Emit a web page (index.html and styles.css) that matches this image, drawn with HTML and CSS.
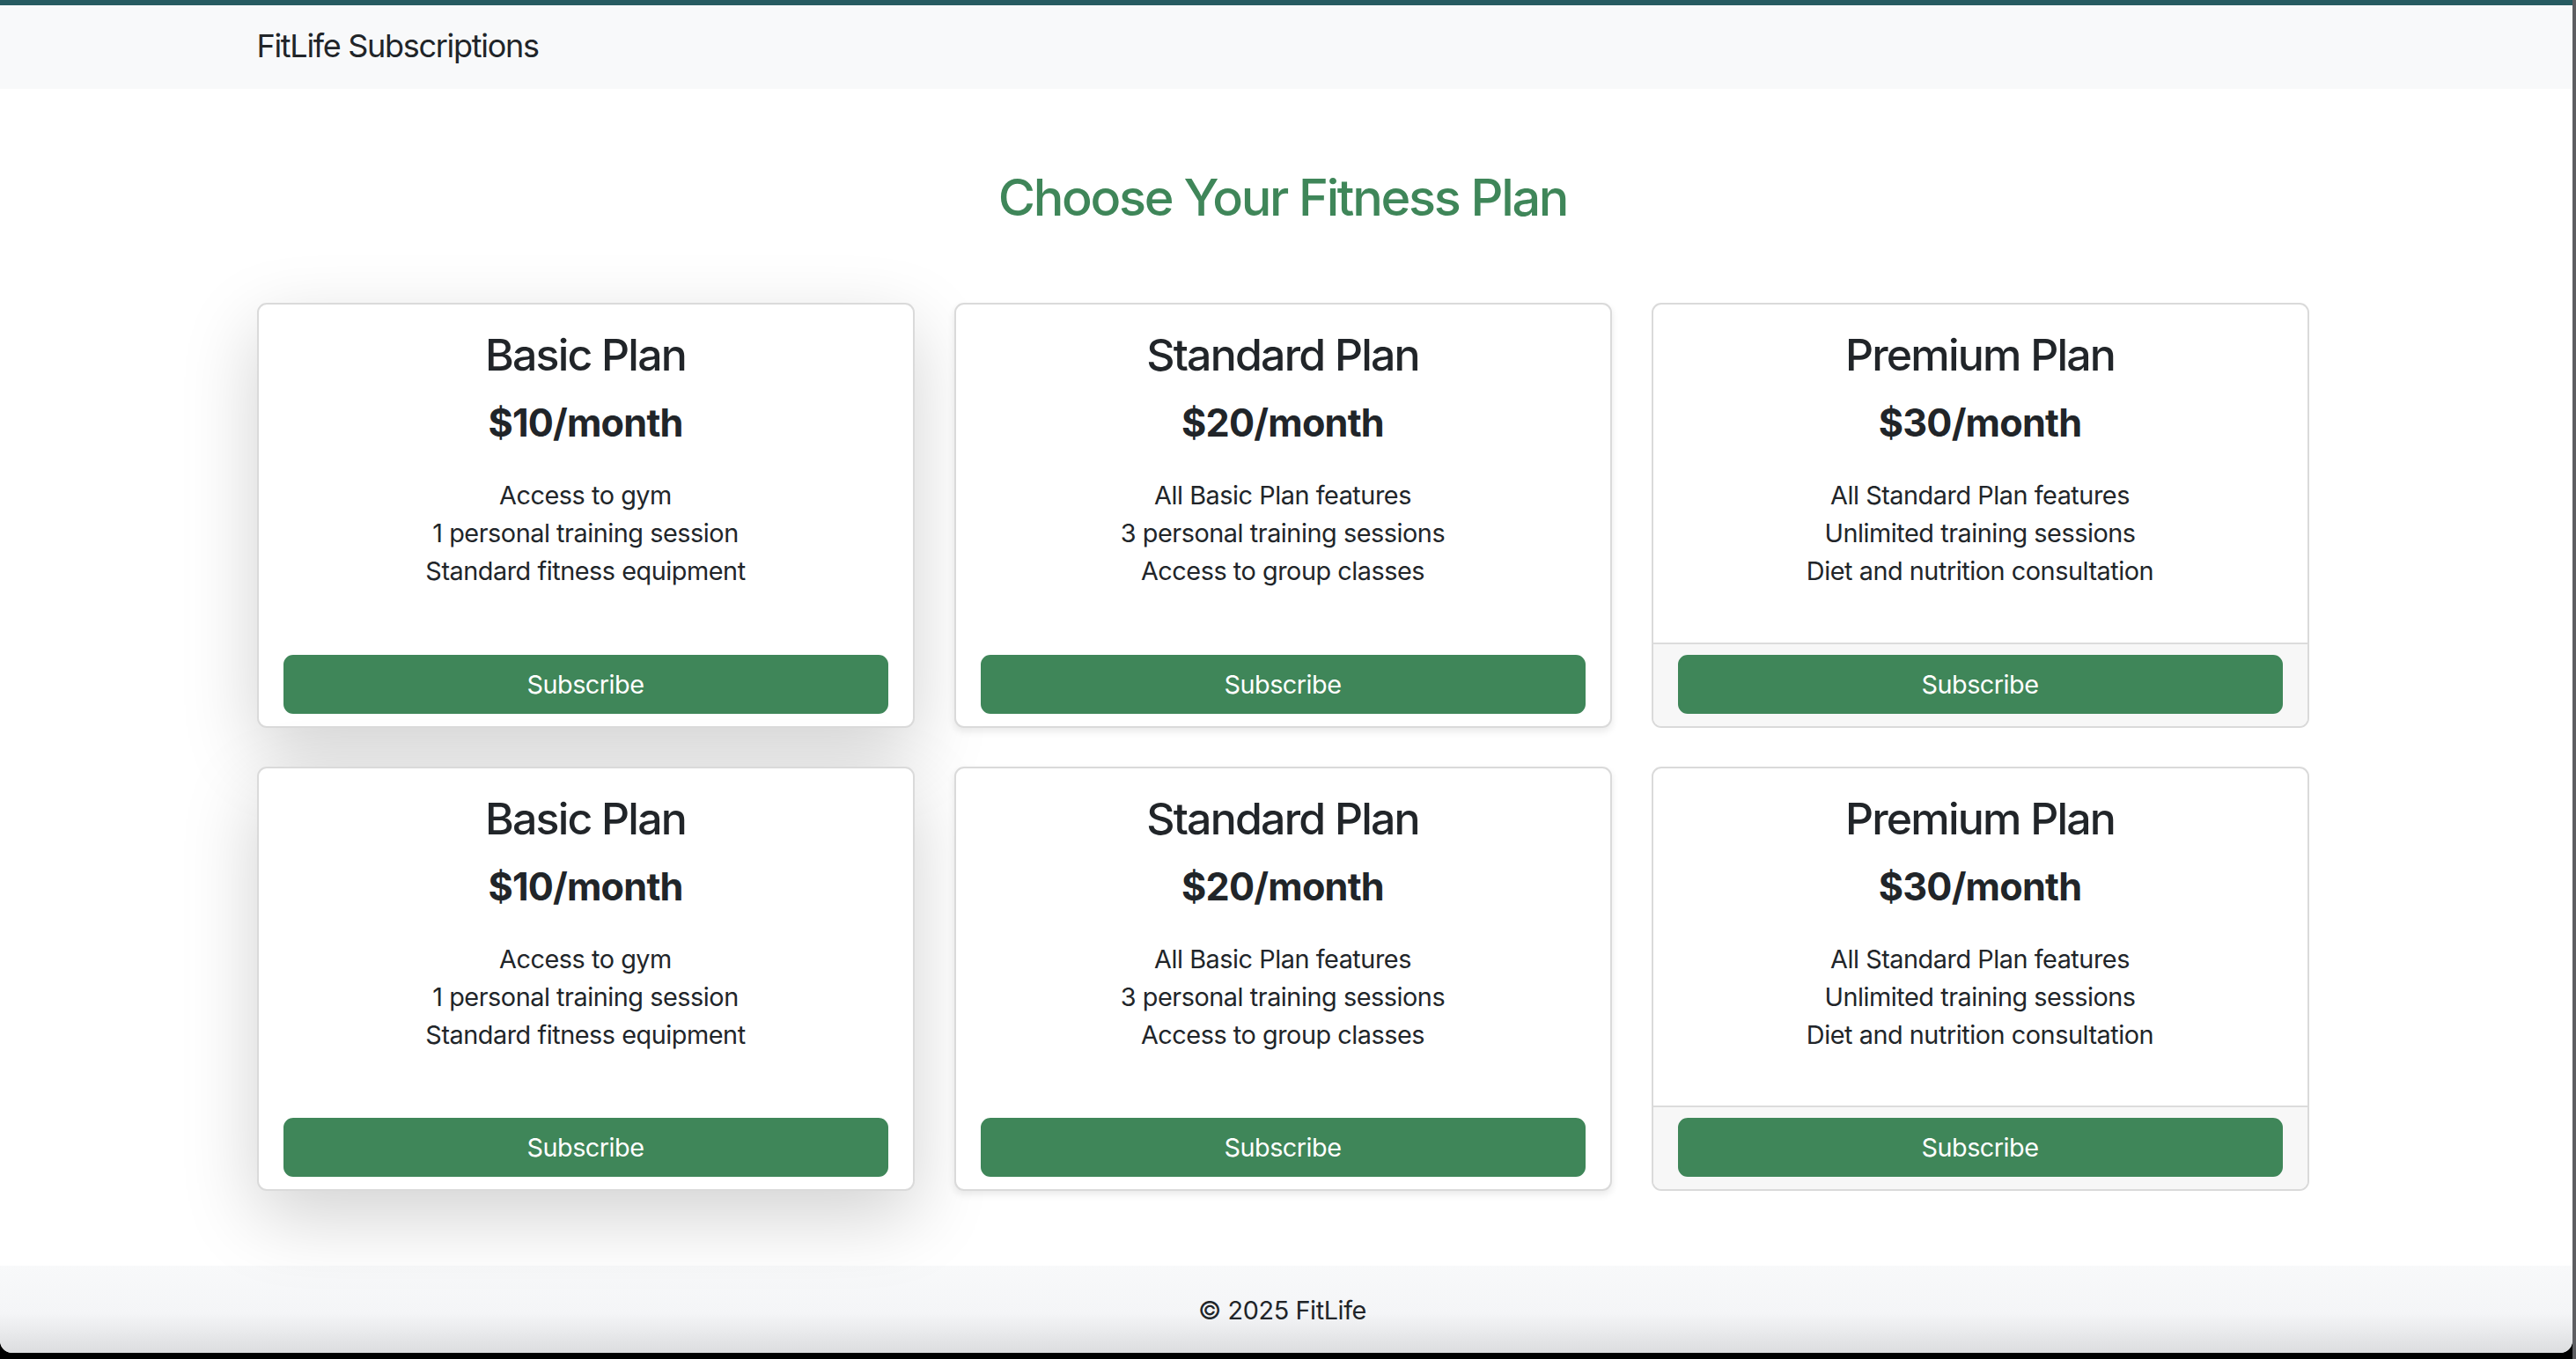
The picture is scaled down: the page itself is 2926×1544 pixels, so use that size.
FILE: index.html
```html
<!DOCTYPE html>
<html lang="en">
<head>
  <meta charset="UTF-8">
  <meta name="viewport" content="width=device-width, initial-scale=1.0">
  <title>FitLife Subscriptions</title>
  <link rel="stylesheet" href="styles.css">
</head>
<body>
  <div class="screen">
    <div class="window">
      <nav class="navbar">
        <div class="container">
          <span class="brand">FitLife Subscriptions</span>
        </div>
      </nav>

      <main class="container main">
        <h2 class="page-title">Choose Your Fitness Plan</h2>

        <div class="plans">
          <!-- Row 1 -->
          <div class="plan plan-lift">
            <div class="plan-body">
              <h3 class="plan-name">Basic Plan</h3>
              <p class="plan-price">$10/month</p>
              <ul class="plan-features">
                <li>Access to gym</li>
                <li>1 personal training session</li>
                <li>Standard fitness equipment</li>
              </ul>
            </div>
            <div class="plan-footer">
              <button class="btn-subscribe">Subscribe</button>
            </div>
          </div>

          <div class="plan plan-soft">
            <div class="plan-body">
              <h3 class="plan-name">Standard Plan</h3>
              <p class="plan-price">$20/month</p>
              <ul class="plan-features">
                <li>All Basic Plan features</li>
                <li>3 personal training sessions</li>
                <li>Access to group classes</li>
              </ul>
            </div>
            <div class="plan-footer">
              <button class="btn-subscribe">Subscribe</button>
            </div>
          </div>

          <div class="plan">
            <div class="plan-body">
              <h3 class="plan-name">Premium Plan</h3>
              <p class="plan-price">$30/month</p>
              <ul class="plan-features">
                <li>All Standard Plan features</li>
                <li>Unlimited training sessions</li>
                <li>Diet and nutrition consultation</li>
              </ul>
            </div>
            <div class="plan-footer plan-footer-filled">
              <button class="btn-subscribe">Subscribe</button>
            </div>
          </div>

          <!-- Row 2 -->
          <div class="plan plan-lift">
            <div class="plan-body">
              <h3 class="plan-name">Basic Plan</h3>
              <p class="plan-price">$10/month</p>
              <ul class="plan-features">
                <li>Access to gym</li>
                <li>1 personal training session</li>
                <li>Standard fitness equipment</li>
              </ul>
            </div>
            <div class="plan-footer">
              <button class="btn-subscribe">Subscribe</button>
            </div>
          </div>

          <div class="plan plan-soft">
            <div class="plan-body">
              <h3 class="plan-name">Standard Plan</h3>
              <p class="plan-price">$20/month</p>
              <ul class="plan-features">
                <li>All Basic Plan features</li>
                <li>3 personal training sessions</li>
                <li>Access to group classes</li>
              </ul>
            </div>
            <div class="plan-footer">
              <button class="btn-subscribe">Subscribe</button>
            </div>
          </div>

          <div class="plan">
            <div class="plan-body">
              <h3 class="plan-name">Premium Plan</h3>
              <p class="plan-price">$30/month</p>
              <ul class="plan-features">
                <li>All Standard Plan features</li>
                <li>Unlimited training sessions</li>
                <li>Diet and nutrition consultation</li>
              </ul>
            </div>
            <div class="plan-footer plan-footer-filled">
              <button class="btn-subscribe">Subscribe</button>
            </div>
          </div>
        </div>
      </main>

      <footer class="footer">&copy; 2025 FitLife</footer>
    </div>
    <div class="desktop-edge"></div>
  </div>
</body>
</html>
```

FILE: styles.css
```css
body {
  margin: 0;
  background: #000;
  color: #212529;
  font-family: Inter, "Noto Sans", sans-serif;
  overflow: hidden;
}

.screen {
  display: flex;
  height: 1544px;
}

.window {
  width: 2922px;
  height: 1537px;
  display: flex;
  flex-direction: column;
  background: #fff;
  border-radius: 0 0 14px 14px;
  overflow: hidden;
}

.desktop-edge {
  flex: 1;
  background: #5e5e62;
}

.container {
  width: 2331px;
  margin: 0 auto;
  position: relative;
  left: -4px;
}

/* Navbar */
.navbar {
  height: 101px;
  box-sizing: border-box;
  border-top: 6px solid #275b61;
  padding-bottom: 4px;
  background: #f8f9fa;
  display: flex;
  align-items: center;
}

.brand {
  font-size: 36px;
  line-height: 54px;
  letter-spacing: -1.3px;
}

/* Main */
.main {
  padding: 89px 0 85px;
}

.page-title {
  margin: 0 0 85px;
  text-align: center;
  color: #3f8659;
  font-size: 57.6px;
  font-weight: 500;
  line-height: 69px;
  letter-spacing: -2.3px;
}

.plans {
  display: grid;
  grid-template-columns: repeat(3, 1fr);
  gap: 44px 45px;
}

.plan {
  display: flex;
  flex-direction: column;
  background: #fff;
  border: 2px solid #dadada;
  border-radius: 11px;
  overflow: hidden;
}

.plan-lift {
  box-shadow: 0 29px 86px rgba(0, 0, 0, 0.18);
}

.plan-soft {
  box-shadow: 0 4px 9px rgba(0, 0, 0, 0.09);
}

.plan-body {
  padding: 27px 29px 29px;
  text-align: center;
}

.plan-name {
  margin: 0 0 21px;
  font-size: 50px;
  font-weight: 500;
  line-height: 60px;
  letter-spacing: -1.8px;
}

.plan-price {
  margin: 0 0 35px;
  font-size: 43.2px;
  font-weight: 700;
  line-height: 52px;
  letter-spacing: -0.8px;
}

.plan-features {
  list-style: none;
  margin: 0 0 30px;
  padding: 0;
  font-size: 28.8px;
  line-height: 43.2px;
  letter-spacing: -0.45px;
}

.plan-footer {
  border-top: 2px solid transparent;
  padding: 12px 28px 14px;
}

.plan-footer-filled {
  border-top-color: #dcdcdc;
  background: #f7f7f7;
}

.btn-subscribe {
  display: block;
  width: 100%;
  height: 67px;
  border: 2px solid #3f8659;
  border-radius: 11px;
  background: #3f8659;
  color: #fff;
  font-family: inherit;
  font-size: 28.8px;
  letter-spacing: -0.5px;
  cursor: pointer;
}

/* Footer */
.footer {
  flex: 1;
  display: flex;
  align-items: center;
  justify-content: center;
  padding-right: 9px;
  padding-top: 2px;
  background: linear-gradient(to bottom, #f8f9fa 0%, #f4f5f7 55%, #dcdddf 100%);
  font-size: 28.8px;
  letter-spacing: -0.4px;
}
```
